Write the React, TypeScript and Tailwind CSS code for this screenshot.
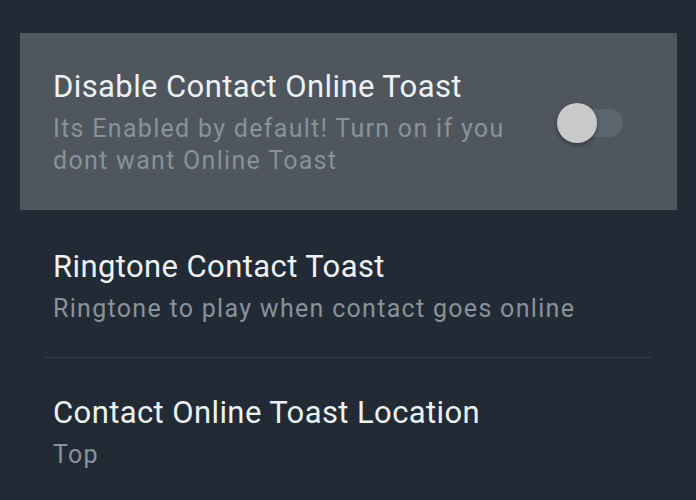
const font = { fontFamily: "Roboto, 'Liberation Sans', sans-serif" };

function Toggle() {
  return (
    <div className="relative h-[40px] w-[66px] shrink-0">
      <div className="absolute right-0 top-[6px] h-[28px] w-[54px] rounded-full bg-[#5b666f]" />
      <div className="absolute left-0 top-0 h-[40px] w-[40px] rounded-full bg-[#c9c9c9] shadow-[0_2px_4px_rgba(0,0,0,0.35)]" />
    </div>
  );
}

function Item({ title, summary }: { title: string; summary: string }) {
  return (
    <div className="min-w-0">
      <div className="text-[31px] leading-[36px] tracking-[0.4px] text-[#eef1f3]">{title}</div>
      <div className="mt-2 text-[25px] leading-[32px] tracking-[1.3px] text-[#88929a]">{summary}</div>
    </div>
  );
}

export default function App() {
  return (
    <div className="h-[500px] w-[696px] overflow-hidden bg-[#222b35]" style={font}>
      <div className="ml-5 mt-[33px] flex w-[657px] items-center bg-[#4f565e] pb-[33px] pl-[33px] pr-[54px] pt-[36px]">
        <div className="max-w-[480px] flex-1">
          <Item
            title="Disable Contact Online Toast"
            summary="Its Enabled by default! Turn on if you dont want Online Toast"
          />
        </div>
        <div className="ml-auto">
          <Toggle />
        </div>
      </div>

      <div className="pl-[53px] pt-[39px] pb-[32px]">
        <Item title="Ringtone Contact Toast" summary="Ringtone to play when contact goes online" />
      </div>
      <div className="ml-[44px] h-px w-[608px] bg-[#333b44]" />
      <div className="pl-[53px] pt-[37px]">
        <Item title="Contact Online Toast Location" summary="Top" />
      </div>
    </div>
  );
}
